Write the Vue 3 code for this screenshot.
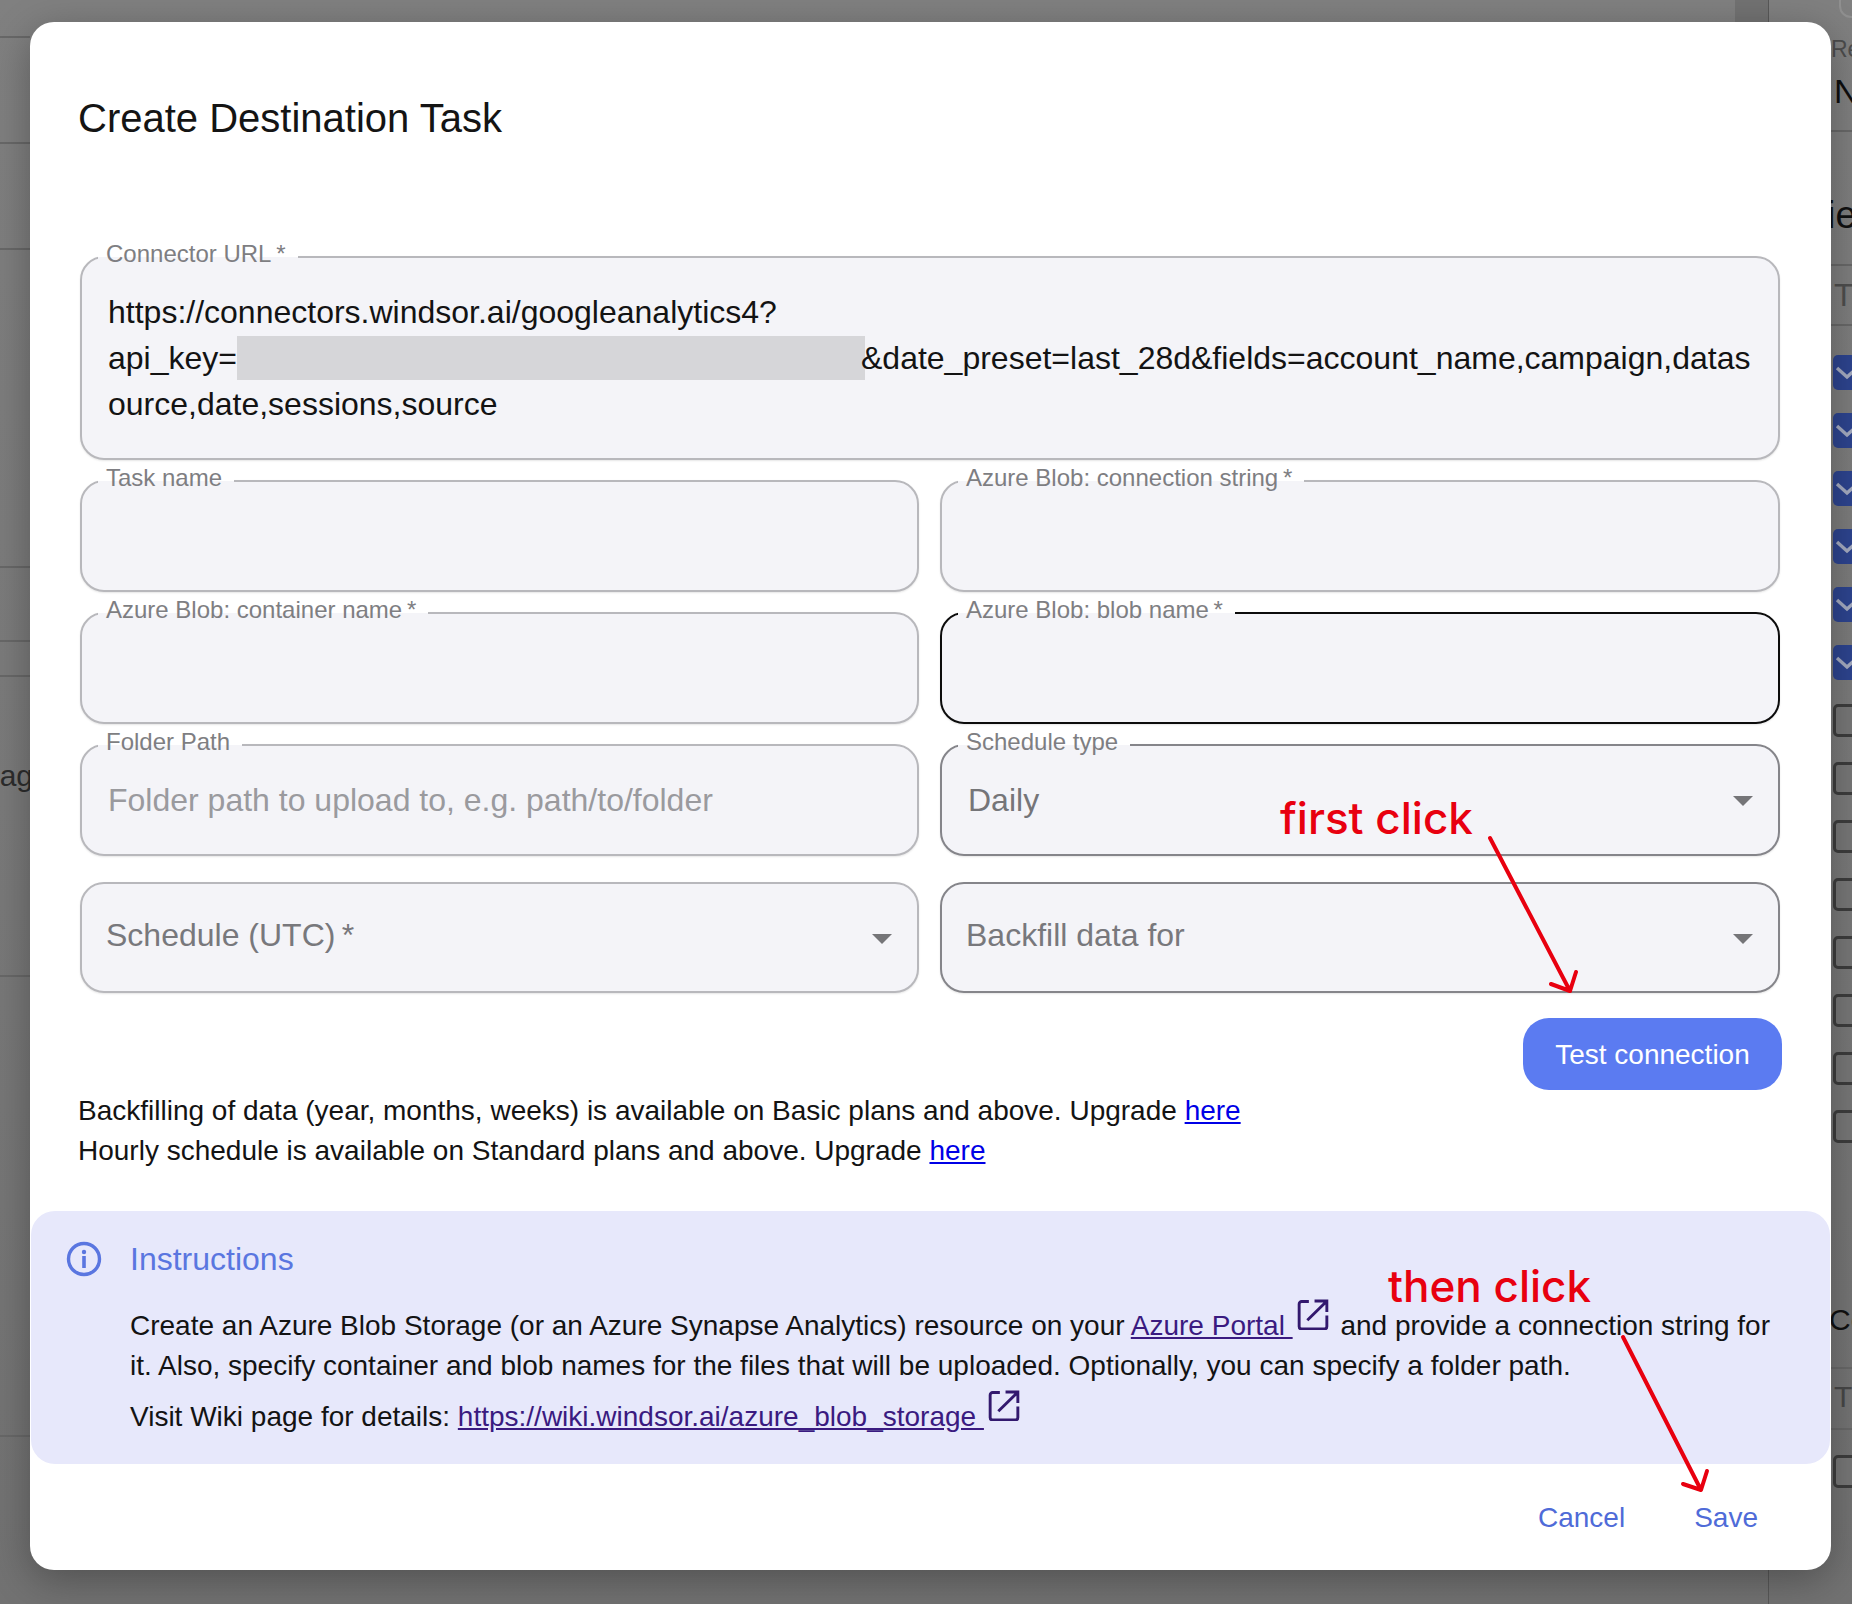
<script setup>
const rows = [
  [
    { label: 'Task name' },
    { label: 'Azure Blob: connection string\u2009*' },
  ],
  [
    { label: 'Azure Blob: container name\u2009*' },
    { label: 'Azure Blob: blob name\u2009*', focused: true },
  ],
  [
    { label: 'Folder Path', placeholder: 'Folder path to upload to, e.g. path/to/folder' },
    { label: 'Schedule type', value: 'Daily', select: true },
  ],
]
const lowerFields = [{ inner: 'Schedule (UTC)\u2009*' }, { inner: 'Backfill data for' }]
const leftLines = [36, 142, 248, 566, 640, 675, 975, 1435]
const rightLines = [130, 264, 324, 1367, 1428]
const checked = 6
const boxesTop = Array.from({ length: 14 }, (_, i) => i)
</script>

<template>
  <div class="page">
    <!-- the page behind the modal -->
    <div class="behind">
      <i v-for="y in leftLines" :key="'l' + y" class="rule rule-left" :style="{ top: y + 'px' }"></i>
      <i v-for="y in rightLines" :key="'r' + y" class="rule rule-right" :style="{ top: y + 'px' }"></i>
      <span class="bt bt-re">Re</span>
      <span class="bt bt-n">N</span>
      <span class="bt bt-ie">ie</span>
      <span class="bt bt-t1">T</span>
      <span class="bt bt-c">Cc</span>
      <span class="bt bt-t2">T</span>
      <span class="bt bt-rag">rag</span>
      <div class="topbox"></div>
      <div class="band"></div>
      <div class="vline"></div>
      <div class="boxes">
        <span v-for="i in boxesTop" :key="i" class="box" :class="{ on: i < checked }">
          <svg v-if="i < checked" viewBox="0 0 26 20" width="26" height="20"><path d="M3 5l10 9 10-9" fill="none" stroke="#a4abc0" stroke-width="3.4" /></svg>
        </span>
      </div>
      <span class="box box-last"></span>
    </div>

    <section class="dialog">
      <h1 class="title">Create Destination Task</h1>

      <form class="form" @submit.prevent>
        <div class="field field-url">
          <span class="label">Connector URL&thinsp;*</span>
          <div class="url">https://connectors.windsor.ai/googleanalytics4?<br />api_key=<span class="redact"></span>&amp;date_preset=last_28d&amp;fields=account_name,campaign,datas<br />ource,date,sessions,source</div>
        </div>

        <template v-for="(row, r) in rows" :key="r">
          <div v-for="f in row" :key="f.label" class="field" :class="{ focused: f.focused, dark: f.select }">
            <span class="label">{{ f.label }}</span>
            <span v-if="f.placeholder" class="value placeholder">{{ f.placeholder }}</span>
            <span v-if="f.value" class="value selected">{{ f.value }}</span>
            <i v-if="f.select" class="caret"></i>
          </div>
        </template>

        <div
          v-for="(f, i) in lowerFields"
          :key="f.inner"
          class="field lower"
          :class="{ dark: i === 1 }"
        >
          <span class="inner-label">{{ f.inner }}</span>
          <i class="caret"></i>
        </div>
      </form>

      <div class="test-row">
        <button class="test" type="button">Test connection</button>
      </div>

      <div class="notes">
        <div>Backfilling of data (year, months, weeks) is available on Basic plans and above. Upgrade <a class="new" href="#">here</a></div>
        <div>Hourly schedule is available on Standard plans and above. Upgrade <a class="new" href="#">here</a></div>
      </div>

      <aside class="info">
        <div class="info-head">
          <svg class="info-icon" viewBox="0 0 36 36" width="36" height="36">
            <circle cx="18" cy="18" r="15.5" fill="none" stroke="#5a76e0" stroke-width="3.4" />
            <circle cx="18" cy="11" r="2.2" fill="#5a76e0" />
            <rect x="16.2" y="15" width="3.6" height="12" fill="#5a76e0" />
          </svg>
          <span class="info-title">Instructions</span>
        </div>
        <div class="info-body">Create an Azure Blob Storage (or an Azure Synapse Analytics) resource on your <a href="#">Azure Portal&nbsp;</a><svg class="ext" viewBox="0 0 30 30" width="32" height="31"><path d="M11 2.400H4a2.400 2.400 0 0 0-2.400 2.400v21.800a2.400 2.400 0 0 0 2.400 2.400h22a2.400 2.400 0 0 0 2.400-2.400V16M16.500 2H28.400V12.500M28 2.400 9.500 20.500" fill="none" stroke="#33196e" stroke-width="2.800" /></svg> and provide a connection string for it. Also, specify container and blob names for the files that will be uploaded. Optionally, you can specify a folder path.</div>
        <div class="info-wiki">Visit Wiki page for details: <a href="#">https://wiki.windsor.ai/azure_blob_storage&nbsp;</a><svg class="ext" viewBox="0 0 30 30" width="32" height="31"><path d="M11 2.400H4a2.400 2.400 0 0 0-2.400 2.400v21.800a2.400 2.400 0 0 0 2.400 2.400h22a2.400 2.400 0 0 0 2.400-2.400V16M16.500 2H28.400V12.500M28 2.400 9.500 20.500" fill="none" stroke="#33196e" stroke-width="2.800" /></svg></div>
      </aside>

      <footer class="actions">
        <button class="act" type="button">Cancel</button>
        <button class="act" type="button">Save</button>
      </footer>
    </section>

    <!-- hand-drawn annotations over the screenshot -->
    <span class="note-red note-first">first click</span>
    <span class="note-red note-then">then click</span>
    <svg class="arrows" viewBox="0 0 1852 1604" width="1852" height="1604">
      <g fill="none" stroke="#e8000f" stroke-width="4" stroke-linecap="round" stroke-linejoin="round">
        <path d="M1490 838 1570 991M1576 972 1570 991 1551 984" />
        <path d="M1623 1337 1701 1490M1707 1471 1701 1490 1683 1484" />
      </g>
    </svg>
  </div>
</template>

<style scoped>
.page {
  position: relative;
  width: 1852px;
  height: 1604px;
  overflow: hidden;
  background: linear-gradient(180deg, #808080 0%, #7a7a7a 50%, #727272 100%);
  font-family: "Liberation Sans", Arial, sans-serif;
  color: #111;
}

.behind { position: absolute; inset: 0; }
.rule { position: absolute; height: 2px; background: #686868; }
.rule-left { left: 0; width: 30px; }
.rule-right { left: 1831px; right: 0; }
.bt { position: absolute; line-height: 1; white-space: nowrap; }
.bt-re { left: 1831px; top: 38px; font-size: 23px; color: #4c4c4c; }
.bt-n { left: 1834px; top: 74px; font-size: 34px; color: #0e0e0e; }
.bt-ie { left: 1827px; top: 196px; font-size: 38px; color: #111; }
.bt-t1 { left: 1834px; top: 279px; font-size: 32px; color: #4e4e4e; }
.bt-c { left: 1829px; top: 1305px; font-size: 30px; color: #111; }
.bt-t2 { left: 1834px; top: 1382px; font-size: 30px; color: #474747; }
.bt-rag { right: 1819px; top: 761px; font-size: 30px; color: #2c2c2c; }
.topbox {
  position: absolute;
  left: 1839px;
  top: -30px;
  width: 60px;
  height: 44px;
  border: 2px solid #909090;
  border-radius: 12px;
}
.band {
  position: absolute;
  left: 1735px;
  top: 0;
  height: 22px;
  width: 33px;
  background: #727272;
}
.vline {
  position: absolute;
  left: 1768px;
  top: 0;
  bottom: 0;
  width: 1px;
  background: #585858;
}
.boxes {
  position: absolute;
  left: 1833px;
  top: 355px;
  display: flex;
  flex-direction: column;
  gap: 23px;
}
.box {
  display: flex;
  align-items: center;
  box-sizing: border-box;
  width: 40px;
  height: 33px;
  margin: 1px 0;
  border: 3px solid #3d3d3d;
  border-radius: 5px;
  background: #777;
}
.box.on {
  height: 35px;
  margin: 0;
  border: 0;
  padding-left: 1px;
  background: #2d448f;
}
.box-last { position: absolute; left: 1833px; top: 1454px; }

.dialog {
  position: absolute;
  left: 30px;
  top: 22px;
  box-sizing: border-box;
  width: 1801px;
  height: 1548px;
  border-radius: 24px;
  background: #fff;
  box-shadow: 0 10px 40px rgba(0, 0, 0, 0.3);
  display: flex;
  flex-direction: column;
}
.title {
  margin: 73px 0 114px 48px;
  font-size: 40px;
  line-height: 47px;
  font-weight: 400;
  color: #141414;
}
.form {
  margin: 0 51px 0 50px;
  display: grid;
  grid-template-columns: 839px 840px;
  column-gap: 21px;
  row-gap: 20px;
}
.field {
  position: relative;
  box-sizing: border-box;
  height: 112px;
  border: 2px solid #b8b8bc;
  border-radius: 24px;
  background: #f4f4f8;
  box-shadow: 0 1px 2px rgba(0, 0, 0, 0.1);
  display: flex;
  align-items: center;
}
.field.dark { border-color: #85858a; }
.field.focused { border-color: #0c0c0c; }
.field-url {
  grid-column: 1 / -1;
  height: 204px;
  align-items: flex-start;
}
.lower { margin-top: 6px; height: 111px; }
.label {
  position: absolute;
  left: 16px;
  top: -17px;
  padding: 0 12px 0 8px;
  font-size: 24px;
  line-height: 26px;
  color: #7e7e82;
  white-space: nowrap;
  background: linear-gradient(180deg, #fff 60%, #f4f4f8 60%);
}
.url {
  padding: 31px 0 0 26px;
  font-size: 32px;
  line-height: 46px;
  white-space: nowrap;
  color: #131313;
}
.redact {
  display: inline-block;
  vertical-align: top;
  width: 628px;
  height: 44px;
  margin-top: 1px;
  margin-right: -4px;
  background: #d6d6d9;
}
.value {
  margin-left: 26px;
  font-size: 32px;
  line-height: 40px;
  margin-top: -1px;
}
.placeholder { color: #9a9a9e; }
.selected { color: #757578; }
.inner-label {
  margin-left: 24px;
  margin-top: -5px;
  font-size: 32px;
  line-height: 40px;
  color: #78787c;
}
.caret {
  position: absolute;
  right: 25px;
  top: 50px;
  width: 0;
  height: 0;
  border-left: 10px solid transparent;
  border-right: 10px solid transparent;
  border-top: 10px solid #757578;
}
.test-row {
  display: flex;
  justify-content: flex-end;
  margin: 25px 49px 0 0;
}
.test {
  width: 259px;
  height: 72px;
  padding: 2px 0 0;
  border: 0;
  border-radius: 26px;
  background: #5b7bf1;
  color: #fff;
  font: 400 28px/40px "Liberation Sans", Arial, sans-serif;
}
.notes {
  margin: 1px 0 0 48px;
  font-size: 28px;
  line-height: 40px;
  color: #131313;
}
.notes a.new { color: #0000e6; }
.info {
  margin: 40px 1px 0;
  box-sizing: border-box;
  height: 253px;
  border-radius: 24px;
  background: #e7e8fb;
  padding: 30px 48px 0 35px;
  font-size: 28px;
  line-height: 40px;
  color: #131313;
}
.info a { color: #3a1a80; }
.info-head {
  display: flex;
  align-items: center;
  gap: 28px;
  height: 36px;
}
.info-title {
  font-size: 32px;
  color: #5a76e0;
}
.info-body {
  margin: 27px 0 0 64px;
}
.info-wiki {
  margin: 9px 0 0 64px;
}
.ext {
  display: inline-block;
  position: relative;
  top: -5px;
  margin: 0 4px;
}
.actions {
  margin: 34px 73px 0 0;
  display: flex;
  justify-content: flex-end;
  gap: 69px;
}
.act {
  padding: 0;
  border: 0;
  background: none;
  color: #4f6bd8;
  font: 400 28px/40px "Liberation Sans", Arial, sans-serif;
}

.arrows { position: absolute; left: 0; top: 0; pointer-events: none; }
.note-red {
  position: absolute;
  font-family: Inter, sans-serif;
  font-weight: 500;
  font-size: 44px;
  line-height: 1;
  color: #e8000f;
  white-space: nowrap;
}
.note-first { left: 1280px; top: 796px; }
.note-then { left: 1388px; top: 1264px; }
</style>
